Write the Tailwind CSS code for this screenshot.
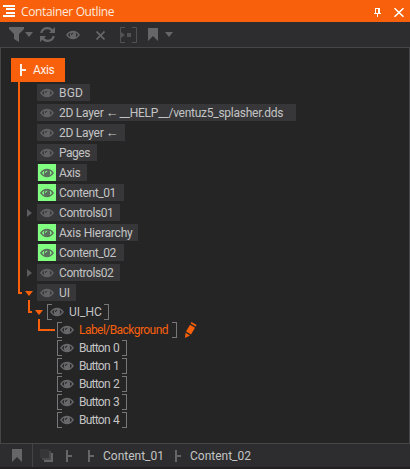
<!DOCTYPE html>
<html lang="en">
<head>
<meta charset="utf-8">
<title>Container Outline</title>
<script src="https://cdn.jsdelivr.net/npm/@tailwindcss/browser@4"></script>
</head>
<body class="w-[410px] h-[469px] overflow-hidden bg-[#2d2d2f] font-['Roboto','Liberation_Sans',sans-serif] text-[12px] text-[#c4c4c4] flex flex-col">
<svg class="hidden">
  <symbol id="eye" viewBox="0 0 14 10"><path fill="currentColor" fill-rule="evenodd" d="M0 5Q3 .8 7 .8T14 5Q11 9.200 7 9.200T0 5ZM2 5Q3 6.600 4.300 7.200Q3.300 5 4.300 2.800Q3 3.400 2 5ZM12 5Q11 3.400 9.700 2.800Q10.700 5 9.700 7.200Q11 6.600 12 5ZM5 5H6Q6 3.700 7.200 3.600V2.600Q5 2.700 5 5Z"/></symbol>
  <symbol id="axis" viewBox="0 0 6 12"><path fill="currentColor" d="M0 0H2V5H6V7H2V12H0Z"/></symbol>
  <symbol id="mark" viewBox="0 0 10 13"><path fill="currentColor" d="M0 0H10V13L5 8L0 13Z"/></symbol>
  <pattern id="dots" width="4" height="4" patternUnits="userSpaceOnUse"><path fill="#58585a" d="M0 0h1v1h-1zM2 2h1v1h-1z"/></pattern>
</svg>

<header class="h-[22px] shrink-0 bg-[#f8600c] text-white flex items-center pl-[3px] pr-[6px]">
  <svg class="w-[12px] h-[12px] shrink-0" viewBox="0 0 12 12" shape-rendering="crispEdges"><path fill="#fff" d="M0 0H12V2H0ZM3 3H12V5H3ZM3 7H12V9H3ZM0 10H12V12H0Z"/></svg>
  <span class="ml-[6px] pt-[2px] font-['Open_Sans',sans-serif] text-[12px] leading-[22px] tracking-[-0.36px] text-[#ffe9dc] whitespace-nowrap">Container Outline</span>
  <svg class="ml-auto w-[7px] h-[9px] mt-[3px]" viewBox="0 0 7 9" shape-rendering="crispEdges"><path fill="#fff" d="M1 0H6V5H7V6H4V9H3V6H0V5H1ZM2 1V5H4V1Z"/></svg>
  <svg class="ml-[13px] w-[10px] h-[9px] mt-[3px]" viewBox="0 0 10 9"><path stroke="#fff" stroke-width="1.500" d="M.5 .2L9.500 8.800M9.500 .2L.5 8.800"/></svg>
</header>

<div class="h-[25px] shrink-0 flex items-center text-[#666668] pl-px">
  <svg class="w-[5px] h-[21px]" shape-rendering="crispEdges"><rect width="4" height="21" fill="url(#dots)"/></svg>
  <svg class="ml-[3px] w-[15px] h-[15px] -mt-px" viewBox="0 0 15 15"><path fill="currentColor" d="M0 0H15V2L10 7V15L5 12V7L0 2Z"/></svg>
  <svg class="ml-[1px] w-[8px] h-[5px]" viewBox="0 0 8 5"><path fill="currentColor" d="M0 0H8L4 5Z"/></svg>
  <svg class="ml-[7px] w-[15px] h-[15px]" viewBox="0 0 15 15"><path fill="none" stroke="currentColor" stroke-width="2.200" d="M1.200 6Q2.500 1.200 7.500 1.200Q10.500 1.200 12.500 4M13.800 9Q12.500 13.800 7.500 13.800Q4.500 13.800 2.500 11"/><path fill="currentColor" d="M15 0V6H9ZM0 15V9H6Z"/></svg>
  <svg class="ml-[11px] w-[14px] h-[10px]"><use href="#eye"/></svg>
  <svg class="ml-[16px] mt-[2px] w-[9px] h-[9px]" viewBox="0 0 9 9"><path stroke="currentColor" stroke-width="1.700" d="M.5 .5L8.500 8.500M8.500 .5L.5 8.500"/></svg>
  <svg class="ml-[15px] w-[17px] h-[16px]" viewBox="0 0 17 16"><path fill="none" stroke="#515153" d="M5 .5H.5V15.500H5M12 .5H16.500V15.500H12"/><path fill="#515153" d="M1 5L5 8L1 11ZM7 6H11V10H7Z"/></svg>
  <svg class="ml-[11px] w-[10px] h-[13px]"><use href="#mark"/></svg>
  <svg class="ml-[7px] w-[8px] h-[5px]" viewBox="0 0 8 5"><path fill="currentColor" d="M0 0H8L4 5Z"/></svg>
</div>

<main class="relative h-[397px] shrink-0 border border-[#464648] bg-[#252526] pl-[10px] pt-[10px]">
  <svg class="absolute left-0 top-0 w-[60px] h-[300px]" shape-rendering="crispEdges"><path fill="none" stroke="#f8600c" stroke-width="2" d="M18 34V245H21M28 252V264H31M38 271V282H54"/></svg>
  <div class="w-[54px] h-[24px] bg-[#f8600c] text-[#fff0e8] flex items-center pl-[9px]">
    <svg class="w-[6px] h-[12px]" shape-rendering="crispEdges"><use href="#axis"/></svg>
    <span class="ml-[7px] tracking-[-0.4px]">Axis</span>
  </div>
  <div id="layers" class="pt-[2px] pl-[15px] flex flex-col gap-[3px]"></div>
  <div id="nested" class="pt-[3px] flex flex-col gap-[2px]"></div>
</main>

<footer class="h-[23px] shrink-0 flex items-center text-[#666668] pl-[3px]">
  <svg class="w-[4px] h-[21px]" shape-rendering="crispEdges"><rect width="4" height="21" fill="url(#dots)"/></svg>
  <svg class="ml-[5px] w-[10px] h-[13px] -mt-px"><use href="#mark"/></svg>
  <i class="ml-[10px] w-px h-full bg-[#434345]"></i>
  <svg class="ml-[7px] w-[13px] h-[13px]" viewBox="0 0 13 13" shape-rendering="crispEdges"><path fill="#666668" d="M4 4H13V13H4Z"/><path fill="#48484a" d="M2 2H11V11H2Z"/><path fill="#363638" d="M0 0H9V9H0Z"/></svg>
  <svg class="ml-[13px] w-[6px] h-[12px]" shape-rendering="crispEdges"><use href="#axis"/></svg>
  <svg class="ml-[16px] w-[6px] h-[12px]" shape-rendering="crispEdges"><use href="#axis"/></svg>
  <span class="ml-[9px] w-[60px] text-[#c4c4c4]">Content_01</span>
  <svg class="ml-[12px] w-[6px] h-[12px]" shape-rendering="crispEdges"><use href="#axis"/></svg>
  <span class="ml-[9px] text-[#c4c4c4]">Content_02</span>
</footer>
<div class="h-[2px] bg-[#241f20]"></div>

<script>
const eye = '<svg class="w-[14px] h-[10px] shrink-0"><use href="#eye"/></svg>';
const closed = '<svg class="w-[5px] h-[8px] ml-px" viewBox="0 0 5 8"><path fill="#5d5d60" d="M0 0L5 4L0 8Z"/></svg>';
const open = '<svg class="w-[8px] h-[5px] -ml-px mt-px" viewBox="0 0 8 5"><path fill="#f8600c" d="M0 0H8L4 5Z"/></svg>';
const arrow = '<span class="w-[11px] mx-[2px] shrink-0 font-[\'DejaVu_Sans\'] text-[13px] leading-[16px] tracking-normal">←</span>';
// label, box width, letter spacing, highlighted, expander
const layers = [['BGD',53,.2],[`<span>2D Layer</span>${arrow}<span class="ml-px">__HELP__/ventuz5_splasher.dds</span>`,259,-.26],[`<span>2D Layer</span>${arrow}`,88,-.26],['Pages',60,-.5],['Axis',50,-.4,'on'],['Content_01',87,-.42,'on'],['Controls01',83,-.42,'',closed],['Axis Hierarchy',101,-.22,'on'],['Content_02',87,-.42,'on'],['Controls02',83,-.42,'',closed],['UI',39,0,'',open]];
document.getElementById('layers').innerHTML = layers.map(([t,w,s,on,exp]) =>
  `<div class="flex items-center h-[17px]"><span class="w-[11px] shrink-0">${exp||''}</span><div class="flex items-center h-[17px] bg-[#37373a]" style="width:${w}px"><span class="${on?'bg-[#80ff80] text-[#5b6b5d]':'text-[#626265]'} ml-px w-[18px] h-full shrink-0 flex items-center justify-center">${eye}</span><span class="ml-[3px] pt-px flex whitespace-pre leading-[17px]" style="letter-spacing:${s}px">${t}</span></div></div>`).join('');
// label, bracket width, indent, letter spacing, word spacing
const nested = [['UI_HC',62,36,0,0],['Label/Background',120,46,-.55,0],['Button 0',70,46,-.75,1],['Button 1',70,46,-.75,1],['Button 2',70,46,-.75,1],['Button 3',70,46,-.75,1],['Button 4',70,46,-.75,1]];
const pencil = '<svg class="ml-[8px] w-[12px] h-[16px]" viewBox="0 0 12 16"><path fill="#f8600c" d="M6.500 0L11.500 3L10.700 4.500L5.700 1.500ZM5 2.700L10 5.700L6 12.500L1 9.500ZM.5 10.700L5 13.500L0 16Z"/></svg>';
document.getElementById('nested').innerHTML = nested.map(([t,w,x,s,ws],i) =>
  `<div class="flex items-center h-[16px]" style="padding-left:${x-(i?0:11)}px">${i?'':`<span class="w-[11px] shrink-0">${open}</span>`}<div class="flex items-center justify-between h-[16px]" style="width:${w}px"><i class="w-[5px] h-full border border-r-0 border-[#77777a] shrink-0"></i><span class="text-[#68686b] -ml-[2px] flex">${eye}</span><span class="ml-[5px] flex-1 whitespace-pre leading-[16px] ${i==1?'text-[#f8600c]':''}" style="letter-spacing:${s}px;word-spacing:${ws}px">${t}</span><i class="w-[5px] h-full border border-l-0 border-[#77777a] shrink-0"></i></div>${i==1?pencil:''}</div>`).join('');
</script>
</body>
</html>
